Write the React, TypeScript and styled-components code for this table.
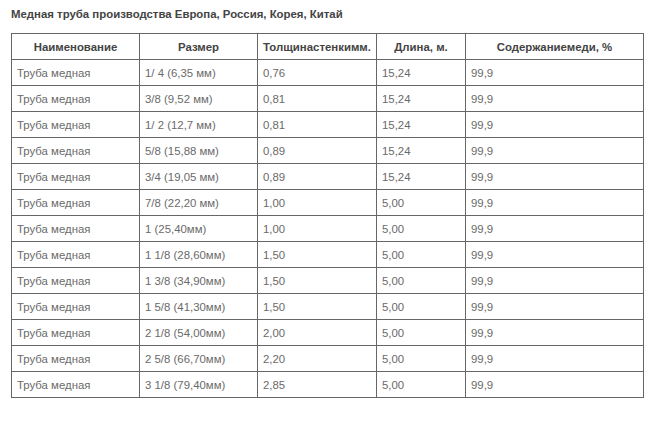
import React, { FC, ReactElement } from 'react';
import styled, { createGlobalStyle } from 'styled-components';

const GlobalStyle = createGlobalStyle`
  body {
    margin: 0;
    background: #fff;
    font-family: "Liberation Sans", Arial, sans-serif;
  }
`;

const Page = styled.div`
  padding: 7px 11px 0 11px;
`;

const Title = styled.h1`
  margin: 0 0 11px 0;
  font-size: 11.4px;
  line-height: 15px;
  font-weight: bold;
  color: #444;
`;

const Table = styled.table`
  border-collapse: collapse;
  table-layout: fixed;
  width: 632px;
  border: 1px solid #555;
`;

const HeadCell = styled.th`
  height: 25px;
  padding: 0 5px;
  border: 1px solid #666;
  font-size: 11.4px;
  font-weight: bold;
  color: #444;
  text-align: center;
`;

const Cell = styled.td`
  height: 25px;
  padding: 0 5px;
  border: 1px solid #666;
  font-size: 11.4px;
  color: #6a6a6a;
  text-align: left;
`;

const columns = [
  { title: 'Наименование', width: 128 },
  { title: 'Размер', width: 118 },
  { title: 'Толщинастенкимм.', width: 119 },
  { title: 'Длина, м.', width: 89 },
  { title: 'Содержаниемеди, %', width: 178 },
];

const rows: string[][] = [
  ['1/ 4 (6,35 мм)', '0,76', '15,24'],
  ['3/8 (9,52 мм)', '0,81', '15,24'],
  ['1/ 2 (12,7 мм)', '0,81', '15,24'],
  ['5/8 (15,88 мм)', '0,89', '15,24'],
  ['3/4 (19,05 мм)', '0,89', '15,24'],
  ['7/8 (22,20 мм)', '1,00', '5,00'],
  ['1 (25,40мм)', '1,00', '5,00'],
  ['1 1/8 (28,60мм)', '1,50', '5,00'],
  ['1 3/8 (34,90мм)', '1,50', '5,00'],
  ['1 5/8 (41,30мм)', '1,50', '5,00'],
  ['2 1/8 (54,00мм)', '2,00', '5,00'],
  ['2 5/8 (66,70мм)', '2,20', '5,00'],
  ['3 1/8 (79,40мм)', '2,85', '5,00'],
];

const App: FC = (): ReactElement => (
  <Page>
    <GlobalStyle />
    <Title>Медная труба производства Европа, Россия, Корея, Китай</Title>
    <Table>
      <colgroup>
        {columns.map((c) => (
          <col key={c.title} style={{ width: c.width }} />
        ))}
      </colgroup>
      <thead>
        <tr>
          {columns.map((c) => (
            <HeadCell key={c.title}>{c.title}</HeadCell>
          ))}
        </tr>
      </thead>
      <tbody>
        {rows.map(([size, wall, len]) => (
          <tr key={size}>
            <Cell>Труба медная</Cell>
            <Cell>{size}</Cell>
            <Cell>{wall}</Cell>
            <Cell>{len}</Cell>
            <Cell>99,9</Cell>
          </tr>
        ))}
      </tbody>
    </Table>
  </Page>
);

export default App;
